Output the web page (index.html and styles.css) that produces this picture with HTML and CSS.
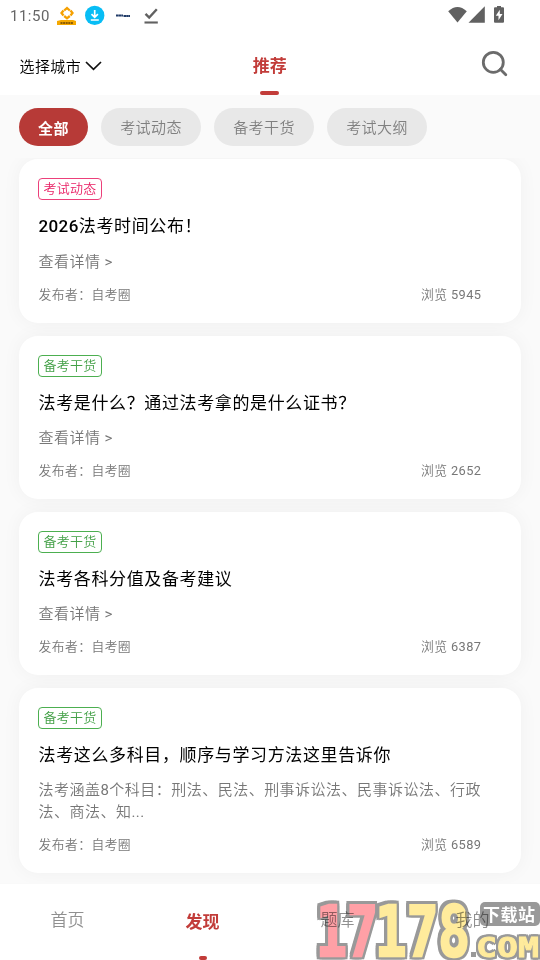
FILE: index.html
```html
<!DOCTYPE html>
<html lang="zh-CN">
<head>
<meta charset="utf-8">
<title>发现</title>
<link rel="stylesheet" href="styles.css">
</head>
<body>
<div class="status">
  <span class="clock">11:50</span>
  <svg class="status-left" width="110" height="32" viewBox="50 0 110 32">
    <path d="M64.200 10.500L67 8l2.800 2.500M70.500 10.500l2 2.500-2 2.500M69.800 16L67 18.300 64.200 16M63.500 15.500l-2-2.500 2-2.500" fill="none" stroke="#f5a000" stroke-width="2.300"/>
    <path d="M61 20h12l3 1v4H57v-4z" fill="#f5a800"/>
    <path d="M60.500 23h13" stroke="#6b4300" stroke-width="1.500" stroke-dasharray="2 .6"/>
    <circle cx="94.700" cy="15.400" r="9.700" fill="#08bdf5"/>
    <path d="M94.700 10v7M91.500 14.200l3.200 3.200 3.200-3.200M90.800 20h8" stroke="#fff" stroke-width="1.700" fill="none"/>
    <path d="M116 15.500h7M123.500 16h6.500" stroke="#203b68" stroke-width="1.800" stroke-dasharray="2.500 .2"/>
    <path d="M145.500 13.800l3.700 3.700 7.600-8.200" stroke="#616161" stroke-width="2.400" fill="none"/>
    <path d="M144.500 22.500h13.300" stroke="#616161" stroke-width="2.100"/>
  </svg>
  <svg class="status-right" width="60" height="32" viewBox="445 0 60 32" fill="#616161">
    <path d="M448.200 11.200Q457.500 2.700 466.800 11.200L457.500 22.400z"/>
    <path d="M484.800 6.300v16.400h-16.300z"/>
    <path d="M495 7.300h2V6h4v1.300h2q1 0 1 1v13.500q0 1-1 1h-8q-1 0-1-1v-13.500q0-1 1-1z"/>
    <path d="M499.800 9.800l-4 6h2.700v4.500l4-6.200h-2.700z" fill="#fff"/>
  </svg>
</div>
<header class="topbar">
  <div class="city">选择城市<svg width="17" height="10" viewBox="0 0 17 10"><path d="M1 1l7.500 7.300L16 1" fill="none" stroke="#111" stroke-width="1.700"/></svg></div>
  <div class="tab">推荐</div>
  <svg class="search" width="28" height="28" viewBox="0 0 28 28"><circle cx="12.300" cy="12.300" r="10" fill="none" stroke="#6b6b6b" stroke-width="2.800"/><path d="M19.300 19.300l5.500 5.500" stroke="#6b6b6b" stroke-width="2.800" stroke-linecap="round"/></svg>
</header>
<nav class="chips">
  <span class="chip chip-on">全部</span><span class="chip">考试动态</span><span class="chip">备考干货</span><span class="chip">考试大纲</span>
</nav>
<main class="list">
  <article class="card">
    <span class="tag tag-pink">考试动态</span>
    <h2><b>2026</b>法考时间公布！</h2>
    <p>查看详情 <i>&gt;</i></p>
    <div class="meta"><span>发布者：自考圈</span><span>浏览 <i>5945</i></span></div>
  </article>
  <article class="card">
    <span class="tag">备考干货</span>
    <h2>法考是什么？通过法考拿的是什么证书？</h2>
    <p>查看详情 <i>&gt;</i></p>
    <div class="meta"><span>发布者：自考圈</span><span>浏览 <i>2652</i></span></div>
  </article>
  <article class="card">
    <span class="tag">备考干货</span>
    <h2>法考各科分值及备考建议</h2>
    <p>查看详情 <i>&gt;</i></p>
    <div class="meta"><span>发布者：自考圈</span><span>浏览 <i>6387</i></span></div>
  </article>
  <article class="card">
    <span class="tag">备考干货</span>
    <h2>法考这么多科目，顺序与学习方法这里告诉你</h2>
    <p>法考涵盖<i>8</i>个科目：刑法、民法、刑事诉讼法、民事诉讼法、行政<br>法、商法、知<i>...</i></p>
    <div class="meta"><span>发布者：自考圈</span><span>浏览 <i>6589</i></span></div>
  </article>
</main>
<footer class="nav">
  <span>首页</span><span class="nav-on">发现</span><span>题库</span><span>我的</span>
</footer>
<svg class="badge" width="226" height="62" viewBox="314 898 226 62">
  <g class="digits">
    <text x="316" y="956" textLength="62" lengthAdjust="spacingAndGlyphs" fill="#ffa0a6" stroke="#ffa0a6">17</text>
    <text x="375" y="956" textLength="95" lengthAdjust="spacingAndGlyphs" fill="#ffeb9c" stroke="#ffeb9c">178</text>
  </g>
  <rect x="471" y="952" width="5" height="5" fill="#999"/>
  <text class="com" x="476" y="956.500" textLength="63" lengthAdjust="spacingAndGlyphs">COM</text>
  <rect x="480" y="902" width="60" height="24" rx="5" fill="#999"/>
  <text class="site" x="483" y="920.500" textLength="52">下载站</text>
</svg>
</body>
</html>
```
FILE: styles.css
```css
* { box-sizing: border-box; }
body {
  margin: 0;
  width: 540px;
  height: 960px;
  overflow: hidden;
  position: relative;
  display: flex;
  flex-direction: column;
  background: #fafafa;
  font-family: Roboto, "Noto Sans CJK SC", sans-serif;
  font-weight: 350;
}
svg { display: block; flex: none; }
i { font-style: normal; font-weight: 400; }
.status {
  height: 32px;
  flex: none;
  display: flex;
  align-items: center;
  padding: 0 35px 0 10px;
  background: #fff;
}
.clock { width: 40px; font-size: 15px; font-weight: 400; letter-spacing: .5px; color: #666; }
.status-right { margin-left: auto; }
.topbar {
  height: 63px;
  flex: none;
  display: grid;
  grid-template-columns: 1fr 40px 1fr;
  grid-template-rows: 63px;
  background: #fff;
  padding: 0 31.500px 0 19.500px;
}
.city {
  display: flex;
  align-items: center;
  gap: 3.500px;
  padding-top: 4px;
  font-size: 15px;
  letter-spacing: .4px;
  color: #000;
}
.tab {
  display: flex;
  flex-direction: column;
  justify-content: space-between;
  align-items: center;
  margin-left: 11.500px;
  padding-top: 22px;
  white-space: nowrap;
  font-size: 17px;
  line-height: 25px;
  font-weight: 700;
  color: #c23c39;
}
.tab::after { content: ""; width: 19px; height: 4px; border-radius: 2px; background: #c23c39; }
.search { justify-self: end; margin-top: 18px; }
.chips { display: flex; gap: 13px; flex: none; padding: 13px 19px 12px; height: 63px; }
.chip {
  height: 38px;
  width: 100px;
  border-radius: 19px;
  background: #e8e8e8;
  color: #808080;
  font-size: 15px;
  letter-spacing: .4px;
  line-height: 40px;
  text-align: center;
}
.chip-on { width: 69px; background: #b73a37; color: #fff; font-weight: 700; line-height: 42px; }
.list {
  flex: 1;
  min-height: 0;
  overflow: hidden;
  display: flex;
  flex-direction: column;
  gap: 12.800px;
  padding: 1.400px 19px 0;
}
.card {
  flex: none;
  padding: 19px 39.500px 19px 19.500px;
  border-radius: 19px;
  background: #fff;
  box-shadow: 0 0 19px rgba(0, 0, 0, .045);
}
.tag {
  display: block;
  width: 64px;
  height: 22px;
  margin-left: -.500px;
  border: 1.500px solid #4caf50;
  border-radius: 4px;
  color: #43a047;
  font-size: 13px;
  letter-spacing: .3px;
  line-height: 19px;
  text-align: center;
  white-space: nowrap;
}
.tag-pink { border-color: #ec407a; color: #e91e63; }
h2 {
  margin: 14px 0 13.200px;
  font-size: 17px;
  font-weight: 400;
  letter-spacing: .630px;
  line-height: 24px;
  white-space: nowrap;
  color: #000;
}
h2 b { font-weight: 500; letter-spacing: .400px; }
p { margin: 0 0 12.700px; font-size: 15px; letter-spacing: .480px; line-height: 21.600px; color: #777; white-space: nowrap; }
.meta {
  display: flex;
  justify-content: space-between;
  font-size: 12.800px;
  letter-spacing: .430px;
  line-height: 18px;
  color: #777;
}
.nav {
  flex: none;
  height: 77px;
  display: grid;
  grid-template-columns: repeat(4, 1fr);
  border-top: 1px solid #f9f9f9;
  background: #fff;
  text-align: center;
  font-size: 17px;
  line-height: 25px;
  color: #909090;
  padding-top: 24px;
}
.nav-on { display: flex; flex-direction: column; align-items: center; padding-top: 2px; color: #c23c39; font-weight: 700; }
.nav-on::after { content: ""; width: 8px; height: 4px; margin-top: 21px; border-radius: 2px; background: #c23c39; }
.badge { position: absolute; right: 0; bottom: 0; mix-blend-mode: multiply; }
.digits {
  font: 700 69px "DejaVu Sans Mono", monospace;
  stroke-width: 2.500px;
  filter: drop-shadow(2.500px 0 0 #999) drop-shadow(-2.500px 0 0 #999) drop-shadow(0 2.500px 0 #999) drop-shadow(0 -2.500px 0 #999);
}
.com {
  font: 700 26px "DejaVu Sans Mono", monospace;
  fill: #ffeb9c;
  stroke: #ffeb9c;
  stroke-width: .800px;
  filter: drop-shadow(2px 0 0 #999) drop-shadow(-2px 0 0 #999) drop-shadow(0 2px 0 #999) drop-shadow(0 -2px 0 #999);
}
.site { font: 700 17px "Noto Sans CJK SC", sans-serif; fill: #fff; }
```
